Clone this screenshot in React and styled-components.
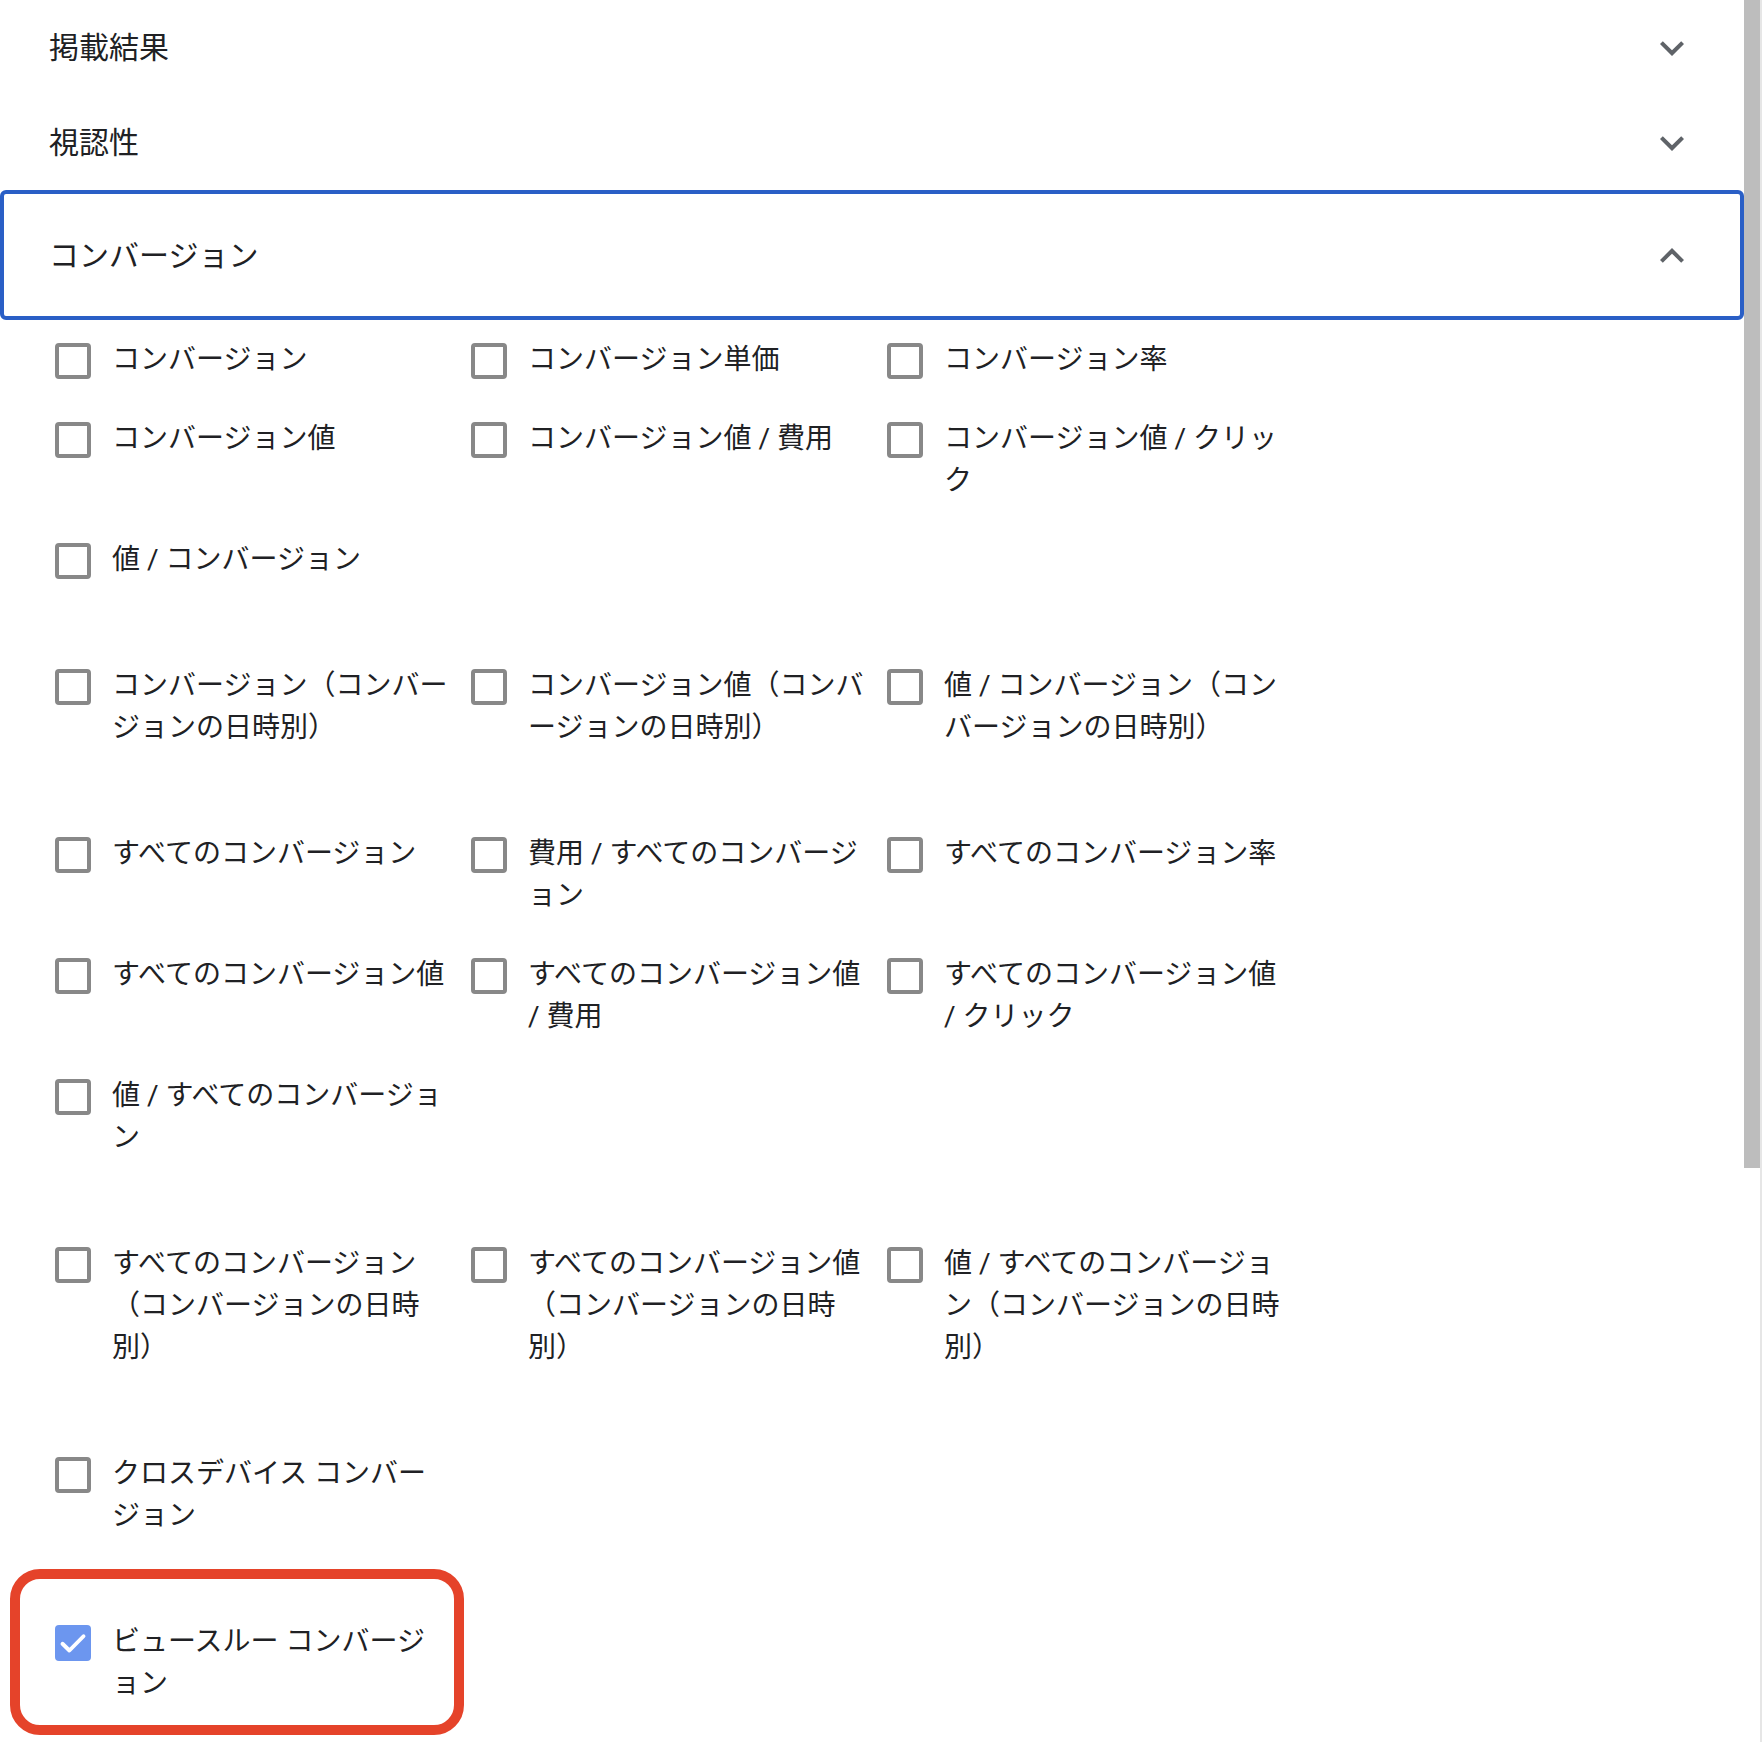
import React from 'react';
import styled, { createGlobalStyle } from 'styled-components';

// DATA

const groups = [
  [
    'コンバージョン',
    'コンバージョン単価',
    'コンバージョン率',
    'コンバージョン値',
    'コンバージョン値 / 費用',
    'コンバージョン値 / クリック',
    '値 / コンバージョン',
  ],
  [
    'コンバージョン（コンバージョンの日時別）',
    'コンバージョン値（コンバージョンの日時別）',
    '値 / コンバージョン（コンバージョンの日時別）',
  ],
  [
    'すべてのコンバージョン',
    '費用 / すべてのコンバージョン',
    'すべてのコンバージョン率',
    'すべてのコンバージョン値',
    'すべてのコンバージョン値 / 費用',
    'すべてのコンバージョン値 / クリック',
    '値 / すべてのコンバージョン',
  ],
  [
    'すべてのコンバージョン（コンバージョンの日時別）',
    'すべてのコンバージョン値（コンバージョンの日時別）',
    '値 / すべてのコンバージョン（コンバージョンの日時別）',
  ],
  ['クロスデバイス コンバージョン'],
];

// COMPONENTS

const Chevron = ({ up }) => (
  <ChevronIcon viewBox="0 0 24 24">
    {up ? (
      <path d="M12 8l-6 6 1.41 1.41L12 10.83l4.59 4.58L18 14z" />
    ) : (
      <path d="M16.59 8.59L12 13.17 7.41 8.59 6 10l6 6 6-6z" />
    )}
  </ChevronIcon>
);

const Option = ({ label, checked }) => (
  <StyledOption>
    <Box $checked={checked}>
      {checked && (
        <svg width="36" height="36" viewBox="0 0 24 24">
          <polyline
            points="5,12.5 9.6,17 19,7.5"
            fill="none"
            stroke="#fff"
            strokeWidth="2.6"
            strokeLinecap="round"
            strokeLinejoin="round"
          />
        </svg>
      )}
    </Box>
    <Label>{label}</Label>
  </StyledOption>
);

const App = () => {
  return (
    <>
      <GlobalStyle />
      <Page>
        <Main>
          <Header>
            <HeaderTitle>掲載結果</HeaderTitle>
            <Chevron />
          </Header>
          <Header>
            <HeaderTitle>視認性</HeaderTitle>
            <Chevron />
          </Header>
          <Header $open>
            <HeaderTitle>コンバージョン</HeaderTitle>
            <Chevron up />
          </Header>
          <Body>
            {groups.map((items, i) => (
              <Group key={i}>
                {items.map((label) => (
                  <Option key={label} label={label} />
                ))}
              </Group>
            ))}
            <Highlight>
              <Option label="ビュースルー コンバージョン" checked />
            </Highlight>
          </Body>
        </Main>
        <ScrollTrack>
          <ScrollThumb />
        </ScrollTrack>
      </Page>
    </>
  );
};

// STYLES

const GlobalStyle = createGlobalStyle`
  html, body {
    margin: 0;
    padding: 0;
    background: #fff;
  }
  body {
    font-family: Roboto, "Noto Sans CJK JP", sans-serif;
    color: #202124;
    -webkit-font-smoothing: antialiased;
  }
`;

const Page = styled.div`
  display: flex;
  width: 1762px;
  height: 1742px;
  overflow: hidden;
  background: #fff;
`;

const Main = styled.div`
  flex: 1;
  display: flex;
  flex-direction: column;
`;

const Header = styled.div`
  display: flex;
  align-items: center;
  justify-content: space-between;
  box-sizing: border-box;
  height: ${(props) => (props.$open ? '130px' : '95px')};
  padding: ${(props) => (props.$open ? '2px 44px 0 45px' : '0 48px 0 49px')};
  border: ${(props) => (props.$open ? '4px solid #2a5fc6' : 'none')};
  border-radius: 6px;
`;

const HeaderTitle = styled.span`
  font-size: 30px;
  line-height: 40px;
  color: #202124;
`;

const ChevronIcon = styled.svg`
  width: 48px;
  height: 48px;
  fill: #5f6368;
  flex-shrink: 0;
`;

const Body = styled.div`
  display: flex;
  flex-direction: column;
  gap: 84px;
  padding: 18.5px 0 0 0;
`;

const Group = styled.div`
  display: grid;
  grid-template-columns: repeat(3, 416px);
  row-gap: 37px;
  padding-left: 55px;
`;

const StyledOption = styled.div`
  display: flex;
  align-items: flex-start;
  gap: 21px;
`;

const Box = styled.div`
  box-sizing: border-box;
  width: 36px;
  height: 36px;
  margin-top: 4px;
  flex-shrink: 0;
  display: flex;
  align-items: center;
  justify-content: center;
  border-radius: 4px;
  border: ${(props) => (props.$checked ? 'none' : '4px solid #888888')};
  background: ${(props) => (props.$checked ? '#6c96ef' : '#fff')};
`;

const Label = styled.span`
  width: 340px;
  font-size: 28px;
  line-height: 42px;
  color: #202124;
  line-break: loose;
`;

const Highlight = styled.div`
  box-sizing: border-box;
  width: 454px;
  margin: -52px 0 0 10px;
  padding: 42px 0 20px 35px;
  border: 10px solid #e5432a;
  border-radius: 30px;
`;

const ScrollTrack = styled.div`
  width: 16px;
  flex-shrink: 0;
  border-right: 2px solid #e6e6e6;
  background: #fff;
`;

const ScrollThumb = styled.div`
  width: 16px;
  height: 1168px;
  background: #bdbdbd;
`;

// EXPORT

export default App;
